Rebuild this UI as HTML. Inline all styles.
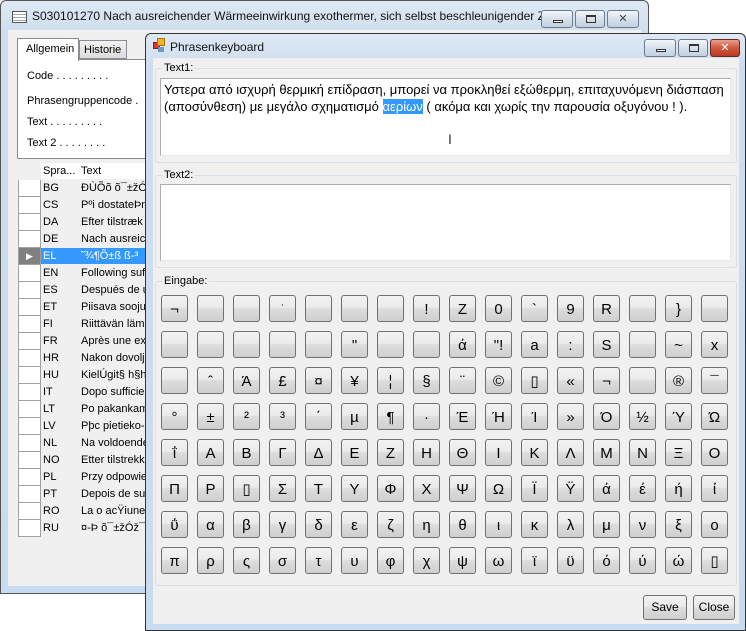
<!DOCTYPE html>
<html><head><meta charset="utf-8"><style>
*{box-sizing:border-box;margin:0;padding:0}
body{width:746px;height:631px;background:#fff;position:relative;overflow:hidden;font-family:"Liberation Sans","DejaVu Sans",sans-serif;font-size:11px;color:#000}
.abs{position:absolute}
.win{border:1px solid #555;border-radius:6px 6px 0 0;background:linear-gradient(#dfe9f5,#cfdeee 30px,#c9dbee)}
.tb{font-size:12px;color:#111}
.cbtn{position:absolute;top:0;height:18px;border:1px solid #6d7a8b;border-radius:3px;background:linear-gradient(#f2f6fb,#d6e0ec 50%,#c3d0e0)}
.client{background:#f0f0f0}
.grp{border:1px solid #d5dfe5;border-radius:3px}
.lbl{background:#f0f0f0;padding:0 2px;font-size:11px;color:#000}
.keys{position:absolute;left:161px;top:295px;width:580px;display:flex;flex-wrap:wrap}
.keys div{width:27px;height:27px;margin:0 9px 9px 0;border:1px solid #707070;border-radius:3px;background:linear-gradient(#f2f2f2,#ebebeb 45%,#dddddd 50%,#cfcfcf);font-size:15px;text-align:center;line-height:27px;font-family:"Liberation Sans","DejaVu Sans",sans-serif}
.row{position:absolute;left:18px;height:17px;width:130px;border-bottom:1px solid #f0f0f0;font-size:11px;line-height:17px}
.row .h{position:absolute;left:0;width:23px;height:17px;background:#fff;border-right:1px solid #a0a0a0;border-bottom:1px solid #a0a0a0;border-left:1px solid #a0a0a0}
.row .c{position:absolute;left:25px}
.row .t{position:absolute;left:63px;white-space:nowrap}
.btn{position:absolute;height:25px;border:1px solid #707070;border-radius:3px;background:linear-gradient(#f2f2f2,#ebebeb 45%,#dddddd 50%,#cfcfcf);font-size:12px;text-align:center;line-height:23px}
</style></head><body>

<!-- back window -->
<div class="abs win" style="left:0;top:0;width:649px;height:594px"></div>
<div class="abs" style="left:12px;top:11px;width:15px;height:12px;border:1px solid #555;background:repeating-linear-gradient(#fff 0 2px,#9ab 2px 3px)"></div>
<div class="abs tb" style="left:32px;top:9px;white-space:nowrap">S030101270 Nach ausreichender Wärmeeinwirkung exothermer, sich selbst beschleunigender Z...</div>
<div class="cbtn" style="left:541px;top:10px;width:32px"><div class="abs" style="left:11px;top:9px;width:10px;height:3px;border:1px solid #333;background:#fff"></div></div>
<div class="cbtn" style="left:575px;top:10px;width:30px"><div class="abs" style="left:10px;top:4px;width:10px;height:8px;border:1px solid #333;border-top-width:2px"></div></div>
<div class="cbtn" style="left:607px;top:10px;width:32px;text-align:center;font-size:11px;line-height:16px;color:#444">✕</div>
<div class="abs client" style="left:8px;top:30px;width:633px;height:556px"></div>
<div class="abs" style="left:17px;top:59px;width:133px;height:100px;border:1px solid #898c95;background:#fff"></div>
<div class="abs" style="left:17px;top:38px;width:62px;height:23px;border:1px solid #898c95;border-bottom:none;background:#fff;padding:4px 0 0 8px">Allgemein</div>
<div class="abs" style="left:79px;top:40px;width:48px;height:19px;border:1px solid #898c95;background:linear-gradient(#f2f2f2,#dcdcdc);padding:3px 0 0 4px">Historie</div>
<div class="abs" style="left:27px;top:70px;white-space:nowrap">Code . . . . . . . . .</div>
<div class="abs" style="left:27px;top:95px;white-space:nowrap">Phrasengruppencode .</div>
<div class="abs" style="left:27px;top:116px;white-space:nowrap">Text . . . . . . . . .</div>
<div class="abs" style="left:27px;top:137px;white-space:nowrap">Text 2 . . . . . . . .</div>
<div class="abs" style="left:17px;top:163px;width:133px;height:376px;background:#f0f0f0"></div>
<div class="row" style="top:163px;background:#fff"><div class="h" style="background:#f0f0f0;border:none"></div><span class="c" style="left:25px">Spra...</span><span class="t">Text</span></div>
<div class="row" style="top:180px"><div class="h"></div><span class="c">BG</span><span class="t">ÐÙÕõ õ¯±žÓ</span></div>
<div class="row" style="top:197px"><div class="h"></div><span class="c">CS</span><span class="t">Pºi dostateÞn</span></div>
<div class="row" style="top:214px"><div class="h"></div><span class="c">DA</span><span class="t">Efter tilstræk</span></div>
<div class="row" style="top:231px"><div class="h"></div><span class="c">DE</span><span class="t">Nach ausreich</span></div>
<div class="row" style="top:248px;background:#3399ff;color:#fff"><div class="h" style="background:#808080;color:#fff;font-size:9px;text-align:center">▶</div><span class="c">EL</span><span class="t">˜¾¶Õ±ß ß-³</span></div>
<div class="row" style="top:265px"><div class="h"></div><span class="c">EN</span><span class="t">Following suf</span></div>
<div class="row" style="top:282px"><div class="h"></div><span class="c">ES</span><span class="t">Después de u</span></div>
<div class="row" style="top:299px"><div class="h"></div><span class="c">ET</span><span class="t">Piisava sooju</span></div>
<div class="row" style="top:316px"><div class="h"></div><span class="c">FI</span><span class="t">Riittävän läm</span></div>
<div class="row" style="top:333px"><div class="h"></div><span class="c">FR</span><span class="t">Après une ex</span></div>
<div class="row" style="top:350px"><div class="h"></div><span class="c">HR</span><span class="t">Nakon dovolj</span></div>
<div class="row" style="top:367px"><div class="h"></div><span class="c">HU</span><span class="t">KielÚgit§ h§h</span></div>
<div class="row" style="top:384px"><div class="h"></div><span class="c">IT</span><span class="t">Dopo sufficie</span></div>
<div class="row" style="top:401px"><div class="h"></div><span class="c">LT</span><span class="t">Po pakankam</span></div>
<div class="row" style="top:418px"><div class="h"></div><span class="c">LV</span><span class="t">Pþc pietieko-</span></div>
<div class="row" style="top:435px"><div class="h"></div><span class="c">NL</span><span class="t">Na voldoende</span></div>
<div class="row" style="top:452px"><div class="h"></div><span class="c">NO</span><span class="t">Etter tilstrekk</span></div>
<div class="row" style="top:469px"><div class="h"></div><span class="c">PL</span><span class="t">Przy odpowie</span></div>
<div class="row" style="top:486px"><div class="h"></div><span class="c">PT</span><span class="t">Depois de su</span></div>
<div class="row" style="top:503px"><div class="h"></div><span class="c">RO</span><span class="t">La o acŸiune</span></div>
<div class="row" style="top:520px"><div class="h"></div><span class="c">RU</span><span class="t">¤-Þ õ¯±žÓž¯</span></div>

<!-- front window -->
<div class="abs win" style="left:145px;top:33px;width:601px;height:598px;border-color:#333"></div>
<div class="abs" style="left:153px;top:42px;width:7px;height:7px;background:#d33;border:1px solid #822"></div>
<div class="abs" style="left:157px;top:38px;width:8px;height:8px;background:#f0b030;border:1px solid #a70"></div>
<div class="abs" style="left:158px;top:47px;width:6px;height:5px;background:#69c"></div>
<div class="abs tb" style="left:170px;top:40px">Phrasenkeyboard</div>
<div class="cbtn" style="left:644px;top:39px;width:32px"><div class="abs" style="left:11px;top:9px;width:10px;height:3px;border:1px solid #333;background:#fff"></div></div>
<div class="cbtn" style="left:678px;top:39px;width:30px"><div class="abs" style="left:10px;top:4px;width:10px;height:8px;border:1px solid #333;border-top-width:2px"></div></div>
<div class="cbtn" style="left:710px;top:39px;width:30px;background:linear-gradient(#e8a090,#d0573f 50%,#b83a22);border-color:#6b2a1f;color:#fff;text-align:center;font-size:11px;line-height:16px;font-weight:bold">✕</div>
<div class="abs client" style="left:153px;top:58px;width:586px;height:566px"></div>

<div class="abs grp" style="left:155px;top:68px;width:582px;height:95px"></div>
<div class="abs lbl" style="left:162px;top:62px">Text1:</div>
<div class="abs" style="left:160px;top:78px;width:571px;height:78px;background:#fff;border:1px solid #abadb3;border-color:#abadb3 #e3e9ef #e3e9ef #abadb3;padding:2px 3px;font-size:13px;line-height:17px">Υστερα από ισχυρή θερμική επίδραση, μπορεί να προκληθεί εξώθερμη, επιταχυνόμενη διάσπαση (αποσύνθεση) με μεγάλο σχηματισμό <span style="background:#3399ff;color:#fff">αερίων</span> ( ακόμα και χωρίς την παρουσία οξυγόνου ! ).</div>
<div class="abs" style="left:448px;top:131px;font-size:14px;color:#333">I</div>

<div class="abs grp" style="left:155px;top:175px;width:582px;height:93px"></div>
<div class="abs lbl" style="left:162px;top:169px">Text2:</div>
<div class="abs" style="left:160px;top:184px;width:571px;height:77px;background:#fff;border:1px solid #abadb3;border-color:#abadb3 #e3e9ef #e3e9ef #abadb3"></div>

<div class="abs grp" style="left:155px;top:281px;width:582px;height:305px"></div>
<div class="abs lbl" style="left:162px;top:275px">Eingabe:</div>

<div class="keys">
<div>¬</div><div></div><div></div><div style="font-size:11px">ʾ</div><div></div><div></div><div></div><div>!</div><div>Z</div><div>0</div><div>`</div><div>9</div><div>R</div><div></div><div>}</div><div></div>
<div></div><div></div><div></div><div></div><div></div><div>"</div><div></div><div></div><div>ά</div><div>"!</div><div>a</div><div>:</div><div>S</div><div></div><div>~</div><div>x</div>
<div></div><div>ˆ</div><div>Ά</div><div>£</div><div>¤</div><div>¥</div><div>¦</div><div>§</div><div>¨</div><div>©</div><div>▯</div><div>«</div><div>¬</div><div></div><div>®</div><div>¯</div>
<div>°</div><div>±</div><div>²</div><div>³</div><div>΄</div><div>µ</div><div>¶</div><div>·</div><div>Έ</div><div>Ή</div><div>Ί</div><div>»</div><div>Ό</div><div>½</div><div>Ύ</div><div>Ώ</div>
<div>ΐ</div><div>Α</div><div>Β</div><div>Γ</div><div>Δ</div><div>Ε</div><div>Ζ</div><div>Η</div><div>Θ</div><div>Ι</div><div>Κ</div><div>Λ</div><div>Μ</div><div>Ν</div><div>Ξ</div><div>Ο</div>
<div>Π</div><div>Ρ</div><div>▯</div><div>Σ</div><div>Τ</div><div>Υ</div><div>Φ</div><div>Χ</div><div>Ψ</div><div>Ω</div><div>Ϊ</div><div>Ϋ</div><div>ά</div><div>έ</div><div>ή</div><div>ί</div>
<div>ΰ</div><div>α</div><div>β</div><div>γ</div><div>δ</div><div>ε</div><div>ζ</div><div>η</div><div>θ</div><div>ι</div><div>κ</div><div>λ</div><div>μ</div><div>ν</div><div>ξ</div><div>ο</div>
<div>π</div><div>ρ</div><div>ς</div><div>σ</div><div>τ</div><div>υ</div><div>φ</div><div>χ</div><div>ψ</div><div>ω</div><div>ϊ</div><div>ϋ</div><div>ό</div><div>ύ</div><div>ώ</div><div>▯</div>
</div>

<div class="btn" style="left:643px;top:595px;width:44px">Save</div>
<div class="btn" style="left:693px;top:595px;width:42px">Close</div>
</body></html>
